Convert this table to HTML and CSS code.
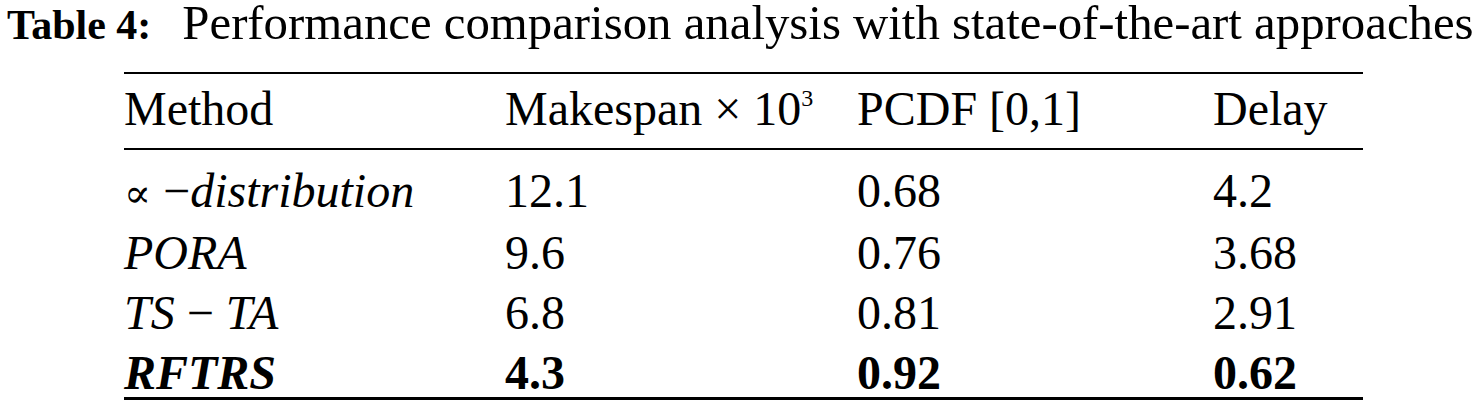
FILE: index.html
```html
<!DOCTYPE html>
<html>
<head>
<meta charset="utf-8">
<link rel="stylesheet" href="styles.css">
</head>
<body>
<div class="page">
  <div class="caption"><span class="label">Table 4:</span>Performance comparison analysis with state-of-the-art approaches</div>
  <div class="table">
    <div class="row head">
      <div>Method</div>
      <div>Makespan × 10<sup>3</sup></div>
      <div>PCDF [0,1]</div>
      <div>Delay</div>
    </div>
    <div class="body">
      <div class="row">
        <div><span class="prop">∝</span> −<i>distribution</i></div>
        <div>12.1</div>
        <div>0.68</div>
        <div>4.2</div>
      </div>
      <div class="row">
        <div><i>PORA</i></div>
        <div>9.6</div>
        <div>0.76</div>
        <div>3.68</div>
      </div>
      <div class="row">
        <div><i>TS</i> − <i>TA</i></div>
        <div>6.8</div>
        <div>0.81</div>
        <div>2.91</div>
      </div>
      <div class="row best">
        <div><i>RFTRS</i></div>
        <div>4.3</div>
        <div>0.92</div>
        <div>0.62</div>
      </div>
    </div>
  </div>
</div>
</body>
</html>
```
FILE: styles.css
```css
html, body {
  margin: 0;
  padding: 0;
  background: #fff;
}
body {
  font-family: "Liberation Serif", "DejaVu Serif", serif;
  font-size: 48px;
  color: #000;
}
.page {
  display: flex;
  flex-direction: column;
}
.caption {
  padding-left: 7px;
  padding-top: 2px;
  font-size: 48.8px;
  line-height: 42px;
  white-space: nowrap;
}
.caption .label {
  font-weight: bold;
  font-size: 42px;
  margin-right: 31px;
}
.table {
  margin-top: 26px;
  margin-left: 124px;
  width: 1239px;
  border-top: 2px solid #000;
  border-bottom: 3px solid #000;
}
.row {
  display: grid;
  grid-template-columns: 381px 352px 356px 150px;
  line-height: 48px;
  white-space: nowrap;
}
.row.head {
  padding: 11px 0 15px;
  border-bottom: 2px solid #000;
}
.body {
  display: flex;
  flex-direction: column;
  gap: 12px;
  padding-top: 17px;
}
.row i {
  font-style: italic;
}
.row.best {
  font-weight: bold;
}
.prop {
  font-family: "DejaVu Serif", serif;
  font-size: 40px;
}
sup {
  font-size: 0.5em;
  line-height: 0;
  vertical-align: 0.8em;
}
```
